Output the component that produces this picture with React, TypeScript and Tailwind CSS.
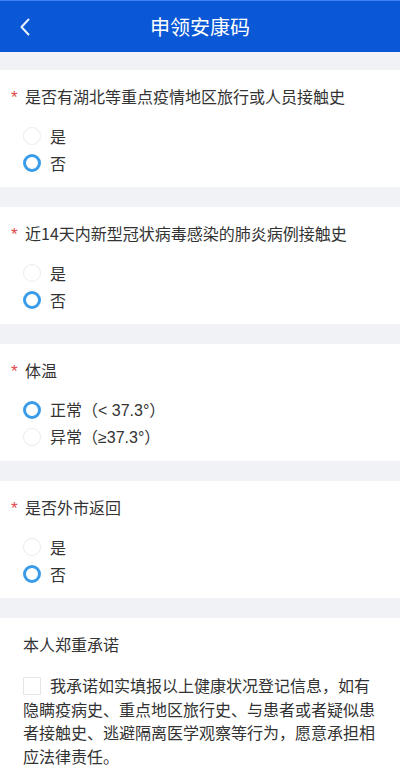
import React from "react";

const font = { fontFamily: '"Noto Sans CJK SC", "Noto Sans", sans-serif' };

function Radio({ checked }: { checked: boolean }) {
  return checked ? (
    <span className="inline-block w-[18px] h-[18px] rounded-full border-[3px] border-[#3a9ce8] bg-white shrink-0" />
  ) : (
    <span className="inline-block w-[18px] h-[18px] rounded-full border border-[#ececec] bg-white shrink-0" />
  );
}

function Question({ title, options, selected }: { title: string; options: React.ReactNode[]; selected: number }) {
  return (
    <div className="bg-white h-[117px] pt-[14px] pl-[11px]">
      <div className="flex items-center h-[24px] text-[16px] text-[#333]">
        <span className="text-[#e0474c] text-[17px] w-[14px] mt-[3px] font-['Liberation_Sans',sans-serif]">*</span>
        <span>{title}</span>
      </div>
      <div className="mt-[14px] pl-[12px] flex flex-col">
        {options.map((o, i) => (
          <div key={i} className="flex items-center h-[27px] text-[16px] text-[#333]">
            <Radio checked={i === selected} />
            <span className="ml-[9px]">{o}</span>
          </div>
        ))}
      </div>
    </div>
  );
}

export default function App() {
  return (
    <div className="w-[400px] min-h-[783px] bg-[#f0f2f5]" style={font}>
      <div className="h-[52px] bg-[#0a58d6] border-t border-[#3b82f0] relative flex items-center justify-center">
        <svg className="absolute left-[19px] top-[16px]" width="12" height="20" viewBox="0 0 12 20" fill="none">
          <path d="M9.5 2.5 L2.5 10 L9.5 17.5" stroke="#e8f0ff" strokeWidth="2" strokeLinecap="round" strokeLinejoin="round" />
        </svg>
        <span className="text-white text-[20px]">申领安康码</span>
      </div>
      <div className="flex flex-col gap-[20px] pt-[18px]">
        <Question title="是否有湖北等重点疫情地区旅行或人员接触史" options={["是", "否"]} selected={1} />
        <Question title="近14天内新型冠状病毒感染的肺炎病例接触史" options={["是", "否"]} selected={1} />
        <Question
          title="体温"
          options={[
            <>正常（<span className="font-['Liberation_Sans',sans-serif]">&lt; 37.3°</span>）</>,
            <>异常（<span className="font-['Liberation_Sans',sans-serif]">≥37.3°</span>）</>,
          ]}
          selected={0}
        />
        <Question title="是否外市返回" options={["是", "否"]} selected={1} />
        <div className="bg-white pt-[14px] pl-[23px] pr-[24px] pb-[20px] text-[16px] text-[#333]">
          <div className="h-[24px] leading-[24px]">本人郑重承诺</div>
          <p className="mt-[18px] leading-[23.5px]">
            <span className="inline-block w-[18px] h-[18px] border border-[#e6e6e6] align-[-3px] mr-[9px]" />
            我承诺如实填报以上健康状况登记信息，如有隐瞒疫病史、重点地区旅行史、与患者或者疑似患者接触史、逃避隔离医学观察等行为，愿意承担相应法律责任。
          </p>
        </div>
      </div>
    </div>
  );
}
